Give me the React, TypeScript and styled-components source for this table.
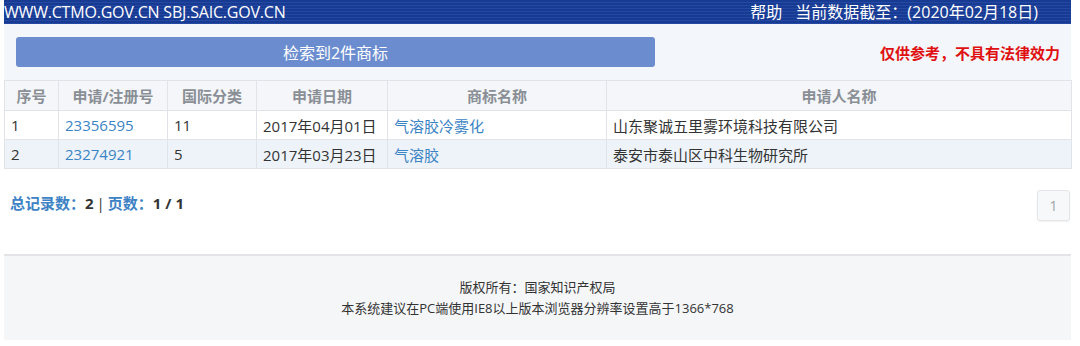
import styled, { createGlobalStyle } from "styled-components";

const GlobalStyle = createGlobalStyle`
  html, body {
    margin: 0;
    padding: 0;
    background: #ffffff;
    font-family: "Open Sans", "Noto Sans CJK SC", sans-serif;
  }
`;

type Row = {
  no: string;
  regNo: string;
  cls: string;
  date: string;
  name: string;
  applicant: string;
};

const rows: Row[] = [
  {
    no: "1",
    regNo: "23356595",
    cls: "11",
    date: "2017年04月01日",
    name: "气溶胶冷雾化",
    applicant: "山东聚诚五里雾环境科技有限公司",
  },
  {
    no: "2",
    regNo: "23274921",
    cls: "5",
    date: "2017年03月23日",
    name: "气溶胶",
    applicant: "泰安市泰山区中科生物研究所",
  },
];

const columns = [
  { title: "序号", width: 54 },
  { title: "申请/注册号", width: 109 },
  { title: "国际分类", width: 89 },
  { title: "申请日期", width: 131 },
  { title: "商标名称", width: 219 },
  { title: "申请人名称", width: 465 },
];

export default function App() {
  return (
    <>
      <GlobalStyle />
      <Page>
        <TopBar>
          <SiteName>WWW.CTMO.GOV.CN SBJ.SAIC.GOV.CN</SiteName>
          <TopLinks>
            <span>帮助</span>
            <span>当前数据截至：(2020年02月18日)</span>
          </TopLinks>
        </TopBar>

        <SearchHead>
          <ResultBar>检索到2件商标</ResultBar>
          <Notice>仅供参考，不具有法律效力</Notice>
        </SearchHead>

        <Table>
          <colgroup>
            {columns.map((c) => (
              <col key={c.title} style={{ width: c.width }} />
            ))}
          </colgroup>
          <thead>
            <tr>
              {columns.map((c) => (
                <Th key={c.title}>{c.title}</Th>
              ))}
            </tr>
          </thead>
          <tbody>
            {rows.map((r, i) => (
              <Tr key={r.no} $alt={i % 2 === 1}>
                <Td>{r.no}</Td>
                <Td>
                  <Link>{r.regNo}</Link>
                </Td>
                <Td>{r.cls}</Td>
                <Td>{r.date}</Td>
                <Td>
                  <Link>{r.name}</Link>
                </Td>
                <Td>{r.applicant}</Td>
              </Tr>
            ))}
          </tbody>
        </Table>

        <PagerRow>
          <Summary>
            <Label>总记录数：</Label>
            <Num>2</Num>
            <Sep>|</Sep>
            <Label>页数：</Label>
            <Num>1 / 1</Num>
          </Summary>
          <PageBtn>1</PageBtn>
        </PagerRow>

        <Footer>
          <FootLine>版权所有：国家知识产权局</FootLine>
          <FootLine>本系统建议在PC端使用IE8以上版本浏览器分辨率设置高于1366*768</FootLine>
        </Footer>
      </Page>
    </>
  );
}

/* ========= styled-components ========== */

const Page = styled.div`
  width: 1067px;
  margin-left: 4px;
  display: flex;
  flex-direction: column;
`;

const TopBar = styled.div`
  height: 24px;
  display: flex;
  align-items: center;
  justify-content: space-between;
  padding: 0 33px 0 0;
  color: #ffffff;
  font-size: 16px;
  line-height: 24px;
  background: repeating-linear-gradient(
    to bottom,
    #173a92 0px,
    #173a92 2px,
    #2548a2 2px,
    #2548a2 3px
  );
`;

const SiteName = styled.div`
  letter-spacing: -0.2px;
`;

const TopLinks = styled.div`
  display: flex;
  gap: 13px;
  font-size: 16px;
`;

const SearchHead = styled.div`
  height: 56px;
  display: flex;
  align-items: center;
  justify-content: space-between;
  padding: 0 11px 0 12px;
  background: #f3f6fa;
`;

const ResultBar = styled.div`
  width: 639px;
  height: 30px;
  border-radius: 3px;
  background: #6b8dcf;
  color: #ffffff;
  font-size: 16px;
  display: flex;
  align-items: center;
  justify-content: center;
`;

const Notice = styled.div`
  color: #e01010;
  font-size: 15px;
  font-weight: 700;
`;

const Table = styled.table`
  width: 100%;
  table-layout: fixed;
  border-collapse: collapse;
  font-size: 15px;
  color: #333333;
`;

const Th = styled.th`
  height: 29px;
  padding: 0;
  background: #f4f6f9;
  color: #8a8f96;
  font-weight: 700;
  text-align: center;
  border: 1px solid #e0e4e9;
`;

const Tr = styled.tr<{ $alt: boolean }>`
  background: ${(p) => (p.$alt ? "#eef3f9" : "#ffffff")};
`;

const Td = styled.td`
  height: 28px;
  padding: 0 0 0 6px;
  border: 1px solid #e0e4e9;
  white-space: nowrap;
`;

const Link = styled.span`
  color: #3a84c4;
`;

const PagerRow = styled.div`
  height: 85px;
  display: flex;
  align-items: flex-start;
  justify-content: space-between;
  padding: 21px 1px 0 6px;
  box-sizing: border-box;
`;

const Summary = styled.div`
  margin-top: 2px;
  font-size: 15px;
  font-weight: 700;
  display: flex;
  align-items: center;
`;

const Label = styled.span`
  color: #3d82c4;
`;

const Num = styled.span`
  color: #333333;
`;

const Sep = styled.span`
  color: #333333;
  margin: 0 3px;
  font-weight: 400;
`;

const PageBtn = styled.div`
  width: 33px;
  height: 31px;
  box-sizing: border-box;
  border: 1px solid #e3e5e8;
  border-radius: 3px;
  background: #f7f8f9;
  color: #a0a4a8;
  font-size: 14px;
  box-shadow: 0 1px 2px rgba(0, 0, 0, 0.06);
  display: flex;
  align-items: center;
  justify-content: center;
`;

const Footer = styled.div`
  height: 86px;
  border-top: 2px solid #e2e4e7;
  background: #f5f6f8;
  display: flex;
  flex-direction: column;
  align-items: center;
  padding-top: 22px;
  gap: 3px;
  box-sizing: border-box;
`;

const FootLine = styled.div`
  font-size: 13px;
  color: #333333;
  line-height: 18px;
`;
